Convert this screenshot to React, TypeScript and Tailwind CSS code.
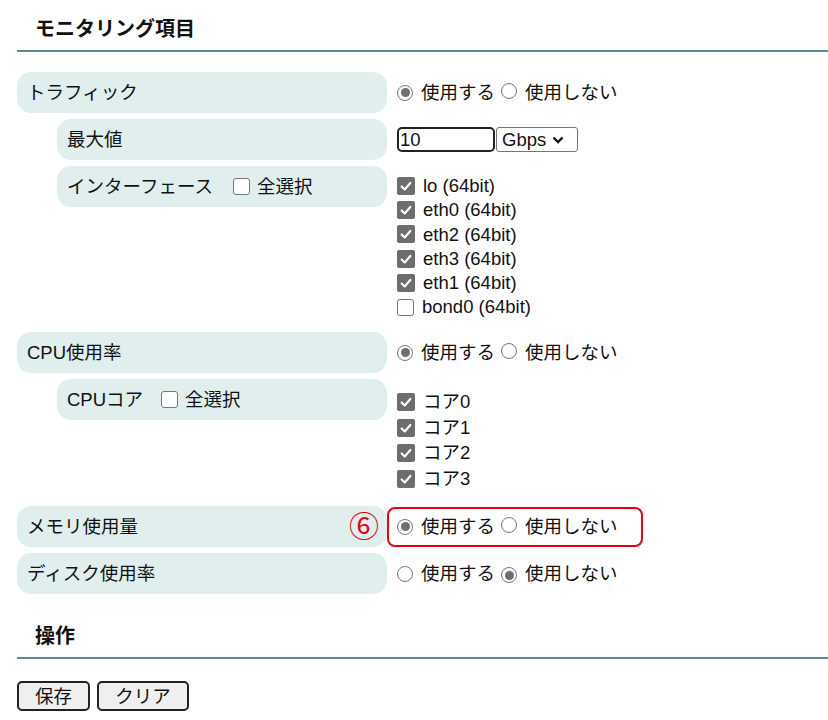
import React from "react";

const FONT = "font-['Liberation_Sans','Noto_Sans_CJK_JP',sans-serif]";

function Radio({ checked }: { checked?: boolean }) {
  return (
    <span className="inline-flex h-[16px] w-[16px] shrink-0 items-center justify-center rounded-full border-[1.5px] border-[#767676] bg-white">
      {checked && <span className="h-[9px] w-[9px] rounded-full bg-[#6f6f6f]" />}
    </span>
  );
}

function Check({ checked }: { checked?: boolean }) {
  if (!checked) {
    return <span className="inline-block h-[17px] w-[17px] shrink-0 rounded-[3px] border-[1.5px] border-[#767676] bg-white" />;
  }
  return (
    <span className="inline-flex h-[18px] w-[18px] shrink-0 items-center justify-center rounded-[2px] bg-[#6d6d6d]">
      <svg viewBox="0 0 16 16" className="h-[14px] w-[14px]">
        <path d="M3 8.5 L6.5 12 L13 4.5" fill="none" stroke="#fff" strokeWidth="2.4" strokeLinecap="round" strokeLinejoin="round" />
      </svg>
    </span>
  );
}

function UseRadios({ on }: { on: boolean }) {
  return (
    <div className="flex items-center">
      <Radio checked={on} />
      <span className="ml-[8px]">使用する</span>
      <span className="ml-[6px]"><Radio checked={!on} /></span>
      <span className="ml-[8px]">使用しない</span>
    </div>
  );
}

function Pill({ nested, children }: { nested?: boolean; children: React.ReactNode }) {
  return (
    <div
      className={
        "flex h-[41px] shrink-0 items-center rounded-[14px] bg-[#e0eeee] pl-[10px] " +
        (nested ? "ml-[40px] w-[330px]" : "w-[370px]")
      }
    >
      {children}
    </div>
  );
}

function Row({ label, nested, children }: { label: React.ReactNode; nested?: boolean; children: React.ReactNode }) {
  return (
    <div className="flex items-center">
      <Pill nested={nested}>{label}</Pill>
      <div className="pl-[10px]">{children}</div>
    </div>
  );
}

function SectionTitle({ children }: { children: React.ReactNode }) {
  return (
    <div className="border-b-2 border-[#5b8d93] pb-[6px] pl-[18px] text-[20px] font-bold leading-[30px]">{children}</div>
  );
}

const ifaces: [string, boolean][] = [
  ["lo (64bit)", true],
  ["eth0 (64bit)", true],
  ["eth2 (64bit)", true],
  ["eth3 (64bit)", true],
  ["eth1 (64bit)", true],
  ["bond0 (64bit)", false],
];

export default function App() {
  return (
    <div className={`${FONT} min-h-[720px] w-[828px] bg-white pl-[17px] pt-[14px] text-[18.5px] text-[#111]`}>
      <SectionTitle>モニタリング項目</SectionTitle>

      <div className="mt-[20px] flex flex-col gap-[6px]">
        <Row label="トラフィック">
          <UseRadios on />
        </Row>

        <Row label="最大値" nested>
          <div className="flex items-center">
            <input
              defaultValue="10"
              className={`${FONT} h-[25px] w-[98px] rounded-[5px] border-2 border-[#222] px-[1px] text-[18.5px] outline-none`}
            />
            <div className="ml-[1px] flex h-[25px] w-[82px] items-center gap-[6px] rounded-[3px] border border-[#767676] px-[5px]">
              <span>Gbps</span>
              <svg viewBox="0 0 12 8" className="h-[8px] w-[12px]">
                <path d="M1.5 1.5 L6 6 L10.5 1.5" fill="none" stroke="#111" strokeWidth="2.4" />
              </svg>
            </div>
          </div>
        </Row>

        <div className="flex h-[160px] items-start">
          <Pill nested>
            <span>インターフェース</span>
            <span className="ml-[20px] flex items-center gap-[7px]">
              <Check />
              <span>全選択</span>
            </span>
          </Pill>
          <div className="flex flex-col pl-[10px] pt-[8px]">
            {ifaces.map(([n, c]) => (
              <div key={n} className="flex h-[24.2px] items-center gap-[8px]">
                <Check checked={c} />
                <span>{n}</span>
              </div>
            ))}
          </div>
        </div>

        <Row label="CPU使用率">
          <UseRadios on />
        </Row>

        <div className="flex h-[121px] items-start">
          <Pill nested>
            <span>CPUコア</span>
            <span className="ml-[18px] flex items-center gap-[7px]">
              <Check />
              <span>全選択</span>
            </span>
          </Pill>
          <div className="flex flex-col pl-[10px] pt-[10px]">
            {["コア0", "コア1", "コア2", "コア3"].map((n) => (
              <div key={n} className="flex h-[25.7px] items-center gap-[8px]">
                <Check checked />
                <span>{n}</span>
              </div>
            ))}
          </div>
        </div>

        <div className="flex items-center">
          <div className="flex h-[41px] w-[370px] shrink-0 items-center justify-between rounded-[14px] bg-[#e0eeee] pl-[10px] pr-[8px]">
            <span>メモリ使用量</span>
            <span className="text-[30px] leading-none text-[#e60012]">⑥</span>
          </div>
          <div className="flex h-[40px] w-[256px] items-center rounded-[8px] border-2 border-[#e60012] pl-[8px]">
            <UseRadios on />
          </div>
        </div>

        <Row label="ディスク使用率">
          <UseRadios on={false} />
        </Row>
      </div>

      <div className="mt-[27px]">
        <SectionTitle>操作</SectionTitle>
      </div>

      <div className="mt-[22px] flex gap-[7px]">
        <button className={`${FONT} h-[30px] w-[73px] rounded-[5px] border-2 border-[#222] bg-[#efefef] text-[18.5px]`}>保存</button>
        <button className={`${FONT} h-[30px] w-[92px] rounded-[5px] border-2 border-[#222] bg-[#efefef] text-[18.5px]`}>クリア</button>
      </div>
    </div>
  );
}
